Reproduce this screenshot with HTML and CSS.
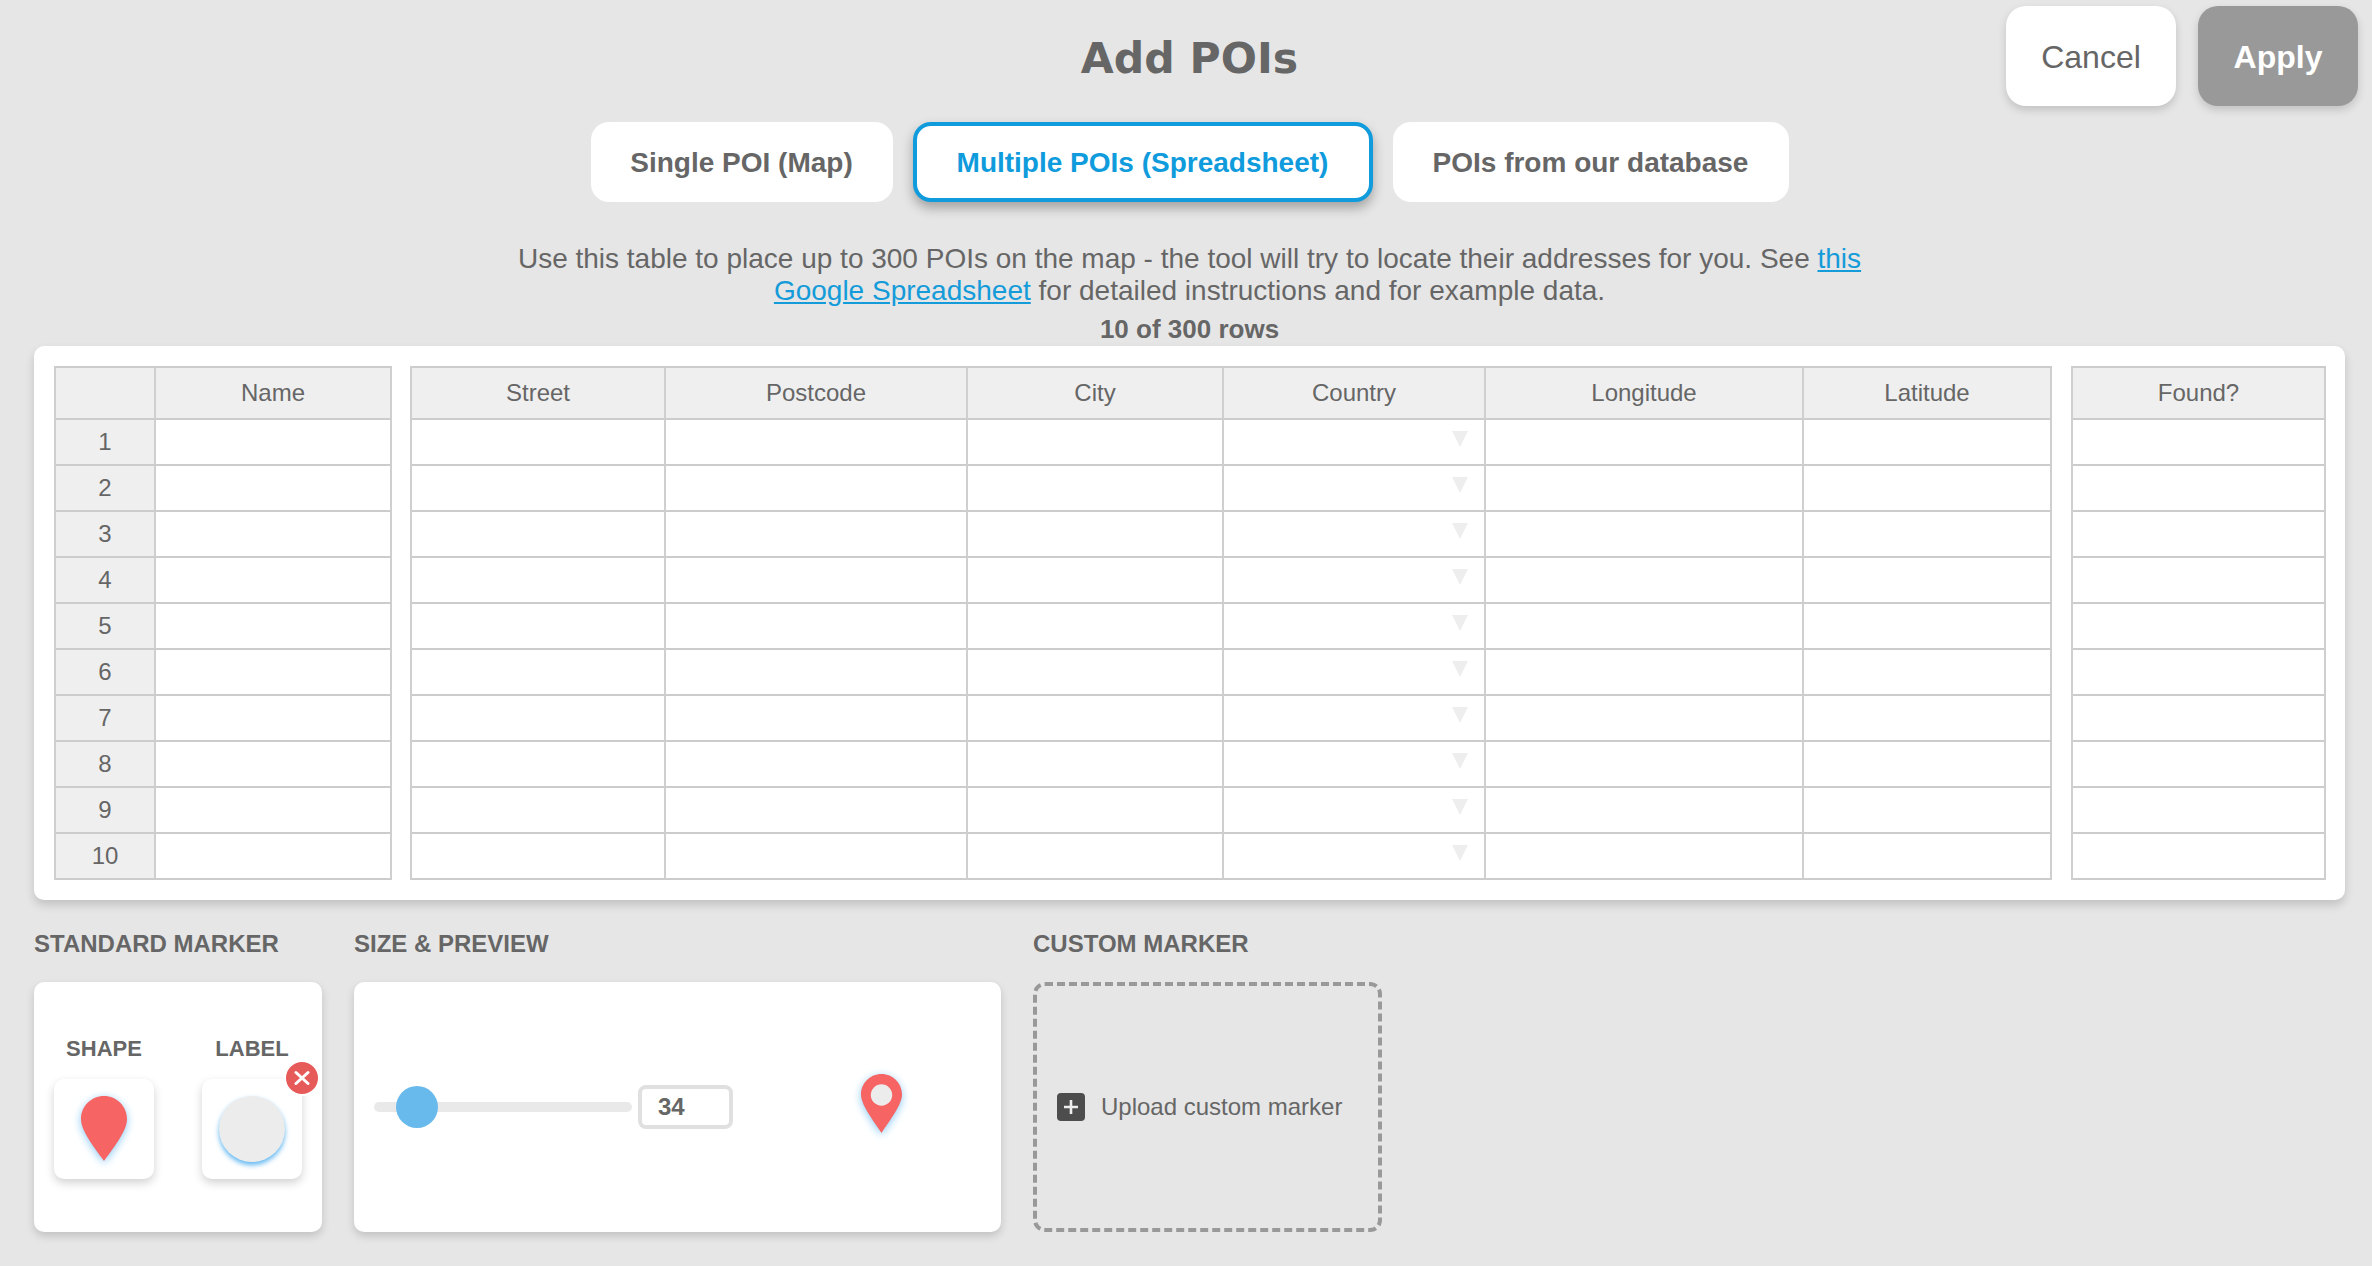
FILE: index.html
```html
<!DOCTYPE html>
<html lang="en">
<head>
<meta charset="utf-8">
<title>Add POIs</title>
<link rel="stylesheet" href="styles.css">
</head>
<body>
<main class="page">
  <header class="top">
    <h1 class="title">Add POIs</h1>
    <div class="actions">
      <button class="action cancel">Cancel</button>
      <button class="action apply">Apply</button>
    </div>
  </header>

  <nav class="tabs">
    <button class="tab tab-single">Single POI (Map)</button>
    <button class="tab tab-multi">Multiple POIs (Spreadsheet)</button>
    <button class="tab tab-db">POIs from our database</button>
  </nav>

  <p class="intro">Use this table to place up to 300 POIs on the map - the tool will try to locate their addresses for you. See <a href="#">this</a><br><a href="#">Google Spreadsheet</a> for detailed instructions and for example data.</p>
  <p class="count">10 of 300 rows</p>

  <section class="sheet">
    <table class="grid grid-a">
      <colgroup><col class="c-idx"><col class="c-name"></colgroup>
      <thead><tr><th></th><th>Name</th></tr></thead>
      <tbody>
        <tr><th>1</th><td></td></tr>
        <tr><th>2</th><td></td></tr>
        <tr><th>3</th><td></td></tr>
        <tr><th>4</th><td></td></tr>
        <tr><th>5</th><td></td></tr>
        <tr><th>6</th><td></td></tr>
        <tr><th>7</th><td></td></tr>
        <tr><th>8</th><td></td></tr>
        <tr><th>9</th><td></td></tr>
        <tr><th>10</th><td></td></tr>
      </tbody>
    </table>
    <table class="grid grid-b">
      <colgroup><col class="c-street"><col class="c-post"><col class="c-city"><col class="c-country"><col class="c-lon"><col class="c-lat"></colgroup>
      <thead><tr><th>Street</th><th>Postcode</th><th>City</th><th>Country</th><th>Longitude</th><th>Latitude</th></tr></thead>
      <tbody>
        <tr><td></td><td></td><td></td><td class="drop"><i class="arrow"></i></td><td></td><td></td></tr>
        <tr><td></td><td></td><td></td><td class="drop"><i class="arrow"></i></td><td></td><td></td></tr>
        <tr><td></td><td></td><td></td><td class="drop"><i class="arrow"></i></td><td></td><td></td></tr>
        <tr><td></td><td></td><td></td><td class="drop"><i class="arrow"></i></td><td></td><td></td></tr>
        <tr><td></td><td></td><td></td><td class="drop"><i class="arrow"></i></td><td></td><td></td></tr>
        <tr><td></td><td></td><td></td><td class="drop"><i class="arrow"></i></td><td></td><td></td></tr>
        <tr><td></td><td></td><td></td><td class="drop"><i class="arrow"></i></td><td></td><td></td></tr>
        <tr><td></td><td></td><td></td><td class="drop"><i class="arrow"></i></td><td></td><td></td></tr>
        <tr><td></td><td></td><td></td><td class="drop"><i class="arrow"></i></td><td></td><td></td></tr>
        <tr><td></td><td></td><td></td><td class="drop"><i class="arrow"></i></td><td></td><td></td></tr>
      </tbody>
    </table>
    <table class="grid grid-c">
      <thead><tr><th>Found?</th></tr></thead>
      <tbody>
        <tr><td></td></tr><tr><td></td></tr><tr><td></td></tr><tr><td></td></tr><tr><td></td></tr>
        <tr><td></td></tr><tr><td></td></tr><tr><td></td></tr><tr><td></td></tr><tr><td></td></tr>
      </tbody>
    </table>
  </section>

  <section class="markers">
    <div class="group group-standard">
      <h2 class="group-label">STANDARD MARKER</h2>
      <div class="card standard">
        <div class="picker">
          <h3 class="picker-label">SHAPE</h3>
          <div class="tile">
            <svg class="glow pin-shape" viewBox="0 0 46 65" width="46" height="65"><path fill="#f66464" d="M23 0C35.7 0 46 10.3 46 23C46 35 33 51 23 65C13 51 0 35 0 23C0 10.3 10.3 0 23 0Z"/></svg>
          </div>
        </div>
        <div class="picker">
          <h3 class="picker-label">LABEL</h3>
          <div class="tile">
            <span class="disc"></span>
            <button class="remove" aria-label="Remove">
              <svg viewBox="0 0 16 16" width="16" height="16"><path d="M2 2.5L14 13.5M14 2.5L2 13.5" stroke="#fff" stroke-width="3" stroke-linecap="round" fill="none"/></svg>
            </button>
          </div>
        </div>
      </div>
    </div>

    <div class="group group-size">
      <h2 class="group-label">SIZE &amp; PREVIEW</h2>
      <div class="card size">
        <div class="slider"><span class="thumb"></span></div>
        <div class="number">34</div>
        <svg class="glow preview-pin" viewBox="0 0 41 59" width="41" height="59"><path fill="#f66464" d="M20.5 0C31.8 0 41 9.2 41 20.5C41 31 29 46 20.5 59C12 46 0 31 0 20.5C0 9.2 9.2 0 20.5 0Z"/><circle cx="20.5" cy="21" r="10.7" fill="#ececec"/></svg>
      </div>
    </div>

    <div class="group group-custom">
      <h2 class="group-label">CUSTOM MARKER</h2>
      <div class="upload">
        <span class="plus"><svg viewBox="0 0 16 16" width="16" height="16"><path d="M8 1V15M1 8H15" stroke="#eee" stroke-width="2.6" fill="none"/></svg></span>
        <span class="upload-text">Upload custom marker</span>
      </div>
    </div>
  </section>
</main>
</body>
</html>
```
FILE: styles.css
```css
* { box-sizing: border-box; }

html, body {
  margin: 0;
  height: 100%;
  background: #e6e6e6;
}

body {
  font-family: "Liberation Sans", Arial, sans-serif;
  color: #666;
  overflow: hidden;
}

.page {
  padding: 0 27px 0 34px;
}

button {
  font-family: inherit;
  border: 0;
  padding: 0;
}

/* header */
.top {
  display: grid;
  grid-template-columns: 1fr auto 1fr;
  height: 122px;
}

.title {
  grid-column: 2;
  margin: 33px 0 0;
  font-family: "DejaVu Sans", Verdana, sans-serif;
  font-weight: 700;
  font-size: 42.6px;
  line-height: 50px;
  color: #666;
}

.actions {
  grid-column: 3;
  justify-self: end;
  display: flex;
  gap: 22px;
  margin: 6px -13px 0 0;
  height: 100px;
}

.action {
  height: 100px;
  padding-top: 2px;
  border-radius: 20px;
  font-size: 32px;
  box-shadow: 0 4px 9px rgba(0, 0, 0, 0.16);
}

.cancel { width: 170px; background: #fff; color: #666; }
.apply  { width: 160px; background: #999; color: #fff; font-weight: 700; }

/* tabs */
.tabs {
  display: flex;
  justify-content: center;
  gap: 20px;
}

.tab {
  height: 80px;
  padding-top: 2px;
  border-radius: 18px;
  background: #fff;
  color: #666;
  font-size: 28px;
  font-weight: 700;
}

.tab-single { width: 302px; }
.tab-db { width: 396px; }

.tab-multi {
  width: 460px;
  border: 4px solid #0f9bdc;
  color: #0f9bdc;
  box-shadow: 0 6px 12px rgba(0, 0, 0, 0.3);
}

/* intro */
.intro {
  margin: 41px 0 0;
  text-align: center;
  font-size: 28px;
  line-height: 32px;
}

.intro a { color: #149bd9; }

.count {
  margin: 6px 0 0;
  text-align: center;
  font-size: 26px;
  line-height: 32px;
  font-weight: 700;
}

/* spreadsheet */
.sheet {
  display: flex;
  height: 554px;
  margin-top: 1px;
  padding: 20px 19px 20px 20px;
  background: #fff;
  border-radius: 10px;
  box-shadow: 0 5px 10px rgba(0, 0, 0, 0.16);
}

.grid {
  table-layout: fixed;
  border-collapse: separate;
  border-spacing: 0;
  height: 514px;
  font-size: 24px;
  border-top: 2px solid #ccc;
  border-left: 2px solid #cfcfcf;
}

.grid-a { width: 338px; }
.grid-b { width: 1642px; margin-left: 18px; }
.grid-c { width: 255px; margin-left: 19px; }

.c-idx { width: 100px; }
.c-name { width: 236px; }
.c-street { width: 254px; }
.c-post { width: 302px; }
.c-city { width: 256px; }
.c-country { width: 262px; }
.c-lon { width: 318px; }
.c-lat { width: 248px; }

.grid th,
.grid td {
  padding: 0;
  border-right: 2px solid #cfcfcf;
  border-bottom: 2px solid #ccc;
}

.grid th {
  background: #efefef;
  color: #666;
  font-weight: 400;
  text-align: center;
}

.grid tbody th { padding-bottom: 1px; }

.grid thead tr { height: 52px; }
.grid tbody tr { height: 46px; }

.grid td { background: #fff; position: relative; }

.arrow {
  position: absolute;
  top: 11px;
  right: 16px;
  width: 0;
  height: 0;
  border-left: 8.5px solid transparent;
  border-right: 8.5px solid transparent;
  border-top: 16px solid #eee;
}

/* lower section */
.markers {
  display: flex;
  gap: 32px;
  margin-top: 30px;
}

.group-label {
  margin: 0 0 24px;
  font-size: 24px;
  line-height: 28px;
  font-weight: 700;
  color: #666;
}

.card {
  height: 250px;
  background: #fff;
  border-radius: 10px;
  box-shadow: 0 4px 9px rgba(0, 0, 0, 0.16);
}

.standard {
  width: 288px;
  display: flex;
  align-items: center;
  gap: 48px;
  padding: 0 20px;
}

.picker-label {
  margin: 0 0 17px;
  text-align: center;
  font-size: 22px;
  line-height: 26px;
  font-weight: 700;
}

.tile {
  position: relative;
  display: flex;
  align-items: center;
  justify-content: center;
  width: 100px;
  height: 100px;
  background: #fff;
  border-radius: 10px;
  box-shadow: 0 4px 10px rgba(0, 0, 0, 0.18);
}

.glow {
  display: block;
  filter: drop-shadow(0 2px 4px rgba(100, 185, 240, 0.75));
}

.disc {
  width: 66px;
  height: 66px;
  border-radius: 50%;
  background: #ececec;
  box-shadow: 0 3px 5px rgba(80, 175, 240, 0.9);
}

.remove {
  position: absolute;
  top: -19px;
  right: -18px;
  display: flex;
  align-items: center;
  justify-content: center;
  width: 36px;
  height: 36px;
  border: 2px solid #fff;
  border-radius: 50%;
  background: #e75a5a;
}

.size {
  width: 647px;
  display: flex;
  align-items: center;
  padding-left: 20px;
}

.slider {
  position: relative;
  width: 258px;
  height: 10px;
  border-radius: 5px;
  background: #e9e9e9;
}

.thumb {
  position: absolute;
  top: -16px;
  left: 22px;
  width: 42px;
  height: 42px;
  border-radius: 50%;
  background: #68b9ec;
}

.number {
  width: 95px;
  height: 44px;
  margin-left: 6px;
  padding-left: 16px;
  border: 4px solid #e0e0e0;
  border-radius: 8px;
  font-size: 24px;
  line-height: 36px;
  font-weight: 700;
}

.preview-pin {
  margin: 0 0 7px 128px;
}

.upload {
  display: flex;
  align-items: center;
  gap: 16px;
  width: 349px;
  height: 250px;
  padding-left: 20px;
  border: 4px dashed #999;
  border-radius: 12px;
  font-size: 24px;
}

.plus {
  display: flex;
  align-items: center;
  justify-content: center;
  width: 28px;
  height: 28px;
  border-radius: 4px;
  background: #4d4d4d;
}
```
